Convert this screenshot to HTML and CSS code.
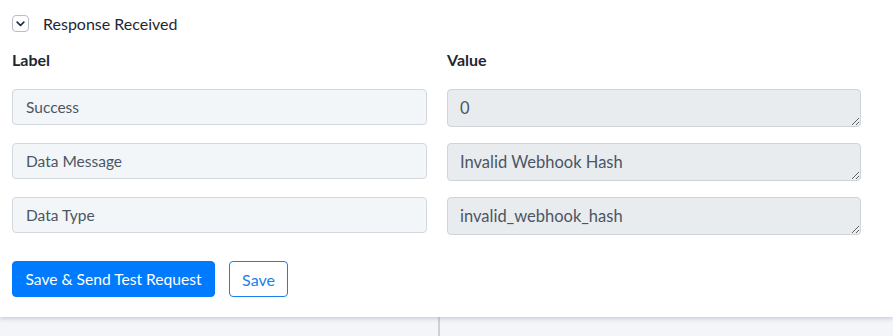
FILE: index.html
```html
<!DOCTYPE html>
<html>
<head>
<meta charset="utf-8">
<link rel="stylesheet" href="styles.css">
</head>
<body>
<div class="card">
  <div class="section-head">
    <span class="toggle">
      <svg width="9" height="6" viewBox="0 0 9 6"><path d="M1.2 1.2 L4.5 4.5 L7.8 1.2" fill="none" stroke="#1b2a4a" stroke-width="1.7" stroke-linecap="round" stroke-linejoin="round"/></svg>
    </span>
    <span class="section-title">Response Received</span>
  </div>
  <div class="grid">
    <div class="col-head">Label</div>
    <div class="col-head">Value</div>
    <input class="label-input" type="text" value="Success" readonly>
    <textarea class="value-input" readonly>0</textarea>
    <input class="label-input" type="text" value="Data Message" readonly>
    <textarea class="value-input" readonly>Invalid Webhook Hash</textarea>
    <input class="label-input" type="text" value="Data Type" readonly>
    <textarea class="value-input" readonly>invalid_webhook_hash</textarea>
  </div>
  <div class="actions">
    <button class="btn btn-primary">Save &amp; Send Test Request</button>
    <button class="btn btn-outline">Save</button>
  </div>
</div>
<div class="below">
  <div class="below-left"></div>
  <div class="below-right"></div>
</div>
</body>
</html>
```

FILE: styles.css
```css
* { box-sizing: border-box; }
html, body { margin: 0; padding: 0; }
body {
  background: #f3f5f8;
  font-family: Lato, "Open Sans", sans-serif;
  color: #1f2733;
  width: 893px;
  height: 336px;
  overflow: hidden;
}
.card {
  background: #fff;
  height: 317px;
  padding: 15px 12px 0 12px;
  box-shadow: 0 2px 4px rgba(120, 135, 170, 0.35);
  position: relative;
  z-index: 1;
}
.section-head {
  display: flex;
  align-items: center;
  height: 17px;
}
.toggle {
  width: 17px;
  height: 17px;
  border: 1px solid #b9bdc5;
  border-radius: 4px;
  display: flex;
  align-items: center;
  justify-content: center;
  margin-right: 14px;
}
.section-title {
  font-size: 16px;
  line-height: 17px;
  color: #1f2733;
}
.grid {
  display: grid;
  grid-template-columns: 415px 414px;
  column-gap: 20px;
  row-gap: 16px;
  align-items: start;
  margin-top: 18px;
}
.col-head {
  font-weight: 700;
  font-size: 16px;
  line-height: 20px;
  color: #1f2733;
  margin-bottom: 3px;
}
.label-input, .value-input {
  font-family: Lato, "Open Sans", sans-serif;
  color: #4b5563;
  border-radius: 4px;
  outline: none;
  margin: 0;
}
.label-input {
  font-size: 15.5px;
  height: 36px;
  padding: 0 13px;
  background: #f3f6f9;
  border: 1px solid #d3d7de;
}
.value-input {
  font-size: 16.5px;
  height: 38px;
  padding: 7px 12px;
  background: #e9ecef;
  border: 1px solid #ced4da;
  resize: vertical;
  line-height: 22px;
  overflow: hidden;
  display: block;
}
.actions {
  display: flex;
  gap: 14px;
  margin-top: 26px;
}
.btn {
  height: 36px;
  font-family: Lato, "Open Sans", sans-serif;
  font-size: 15.6px;
  border-radius: 4px;
  padding: 0;
  cursor: pointer;
}
.btn-primary {
  background: #007bff;
  border: 1px solid #007bff;
  color: #fff;
  width: 203px;
}
.btn-outline {
  background: #fff;
  border: 1px solid #1a7fe8;
  color: #1a7fe8;
  width: 59px;
  font-size: 16px;
}
.below {
  display: flex;
  height: 19px;
}
.below-left {
  width: 440px;
  border-right: 2px solid #cdd1d7;
}
.below-right {
  flex: 1;
}
```
